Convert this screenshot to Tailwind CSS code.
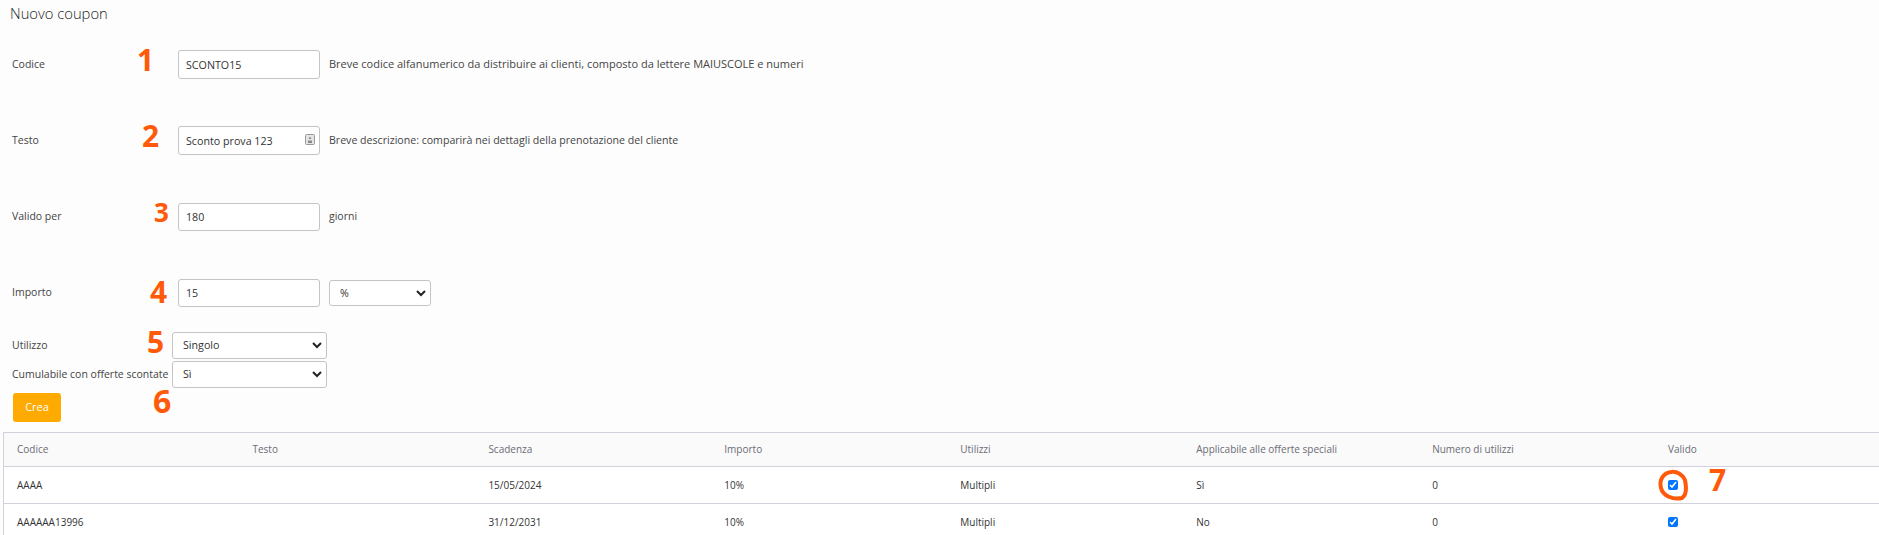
<!DOCTYPE html>
<html lang="it">
<head>
    <meta charset="UTF-8">
    <title>Nuovo coupon</title>
    <script src="https://cdn.jsdelivr.net/npm/@tailwindcss/browser@4"></script>
</head>
<body class="bg-[#fdfdfd]">
<div class="relative h-[535px] w-[1879px] overflow-hidden font-['Open_Sans',sans-serif] text-[10.5px] text-[#444]">
    <h1 class="pl-[10px] pt-[2px] h-[50px] text-[14.75px] leading-[22px] font-light text-[#222]">Nuovo coupon</h1>

    <div class="pl-[12px]">
        <div class="flex h-[29px] items-center">
            <label class="w-[166px]">Codice</label>
            <input type="text" value="SCONTO15" class="h-[29px] w-[142px] rounded-[3px] border border-[#c4c4c4] bg-white px-[7px] text-[10.7px] text-[#333] outline-none">
            <span class="ml-[9px] text-[11px]">Breve codice alfanumerico da distribuire ai clienti, composto da lettere MAIUSCOLE e numeri</span>
        </div>

        <div class="mt-[47px] flex h-[29px] items-center">
            <label class="w-[166px]">Testo</label>
            <div class="relative">
                <input type="text" value="Sconto prova 123" class="h-[29px] w-[142px] rounded-[3px] border border-[#c4c4c4] bg-white px-[7px] text-[10.7px] text-[#333] outline-none">
                <svg class="absolute right-[4px] top-[8px]" width="11" height="12" viewBox="0 0 11 12">
                    <rect x="0.5" y="0.5" width="9" height="10" rx="1" fill="#e4e4e4" stroke="#9a9a9a"/>
                    <path d="M5 2.5 6.5 5h-3zM3 6.5h4V9H3z" fill="#8a8a8a"/>
                </svg>
            </div>
            <span class="ml-[9px] text-[10.6px]">Breve descrizione: comparirà nei dettagli della prenotazione del cliente</span>
        </div>

        <div class="mt-[48px] flex h-[28px] items-center">
            <label class="w-[166px]">Valido per</label>
            <input type="text" value="180" class="h-[28px] w-[142px] rounded-[3px] border border-[#c4c4c4] bg-white px-[7px] text-[10.7px] text-[#333] outline-none">
            <span class="ml-[9px]">giorni</span>
        </div>

        <div class="mt-[48px] flex h-[28px] items-center">
            <label class="w-[166px]">Importo</label>
            <input type="text" value="15" class="h-[28px] w-[142px] rounded-[3px] border border-[#c4c4c4] bg-white px-[7px] text-[10.7px] text-[#333] outline-none">
            <div class="relative ml-[9px]">
                <select class="h-[26px] w-[102px] appearance-none rounded-[3px] border border-[#c4c4c4] bg-white px-[10px] text-[10.7px] text-[#333] outline-none">
                    <option>%</option>
                </select>
                <svg class="absolute right-[5px] top-[9px]" width="10" height="8" viewBox="0 0 10 8"><path d="M1 2l4 4 4-4" fill="none" stroke="#222" stroke-width="2"/></svg>
            </div>
        </div>

        <div class="mt-[25px] flex h-[27px] items-center">
            <label class="w-[160px]">Utilizzo</label>
            <div class="relative">
                <select class="h-[27px] w-[155px] appearance-none rounded-[3px] border border-[#c4c4c4] bg-white px-[10px] text-[10.7px] text-[#333] outline-none">
                    <option>Singolo</option>
                </select>
                <svg class="absolute right-[5px] top-[9px]" width="10" height="8" viewBox="0 0 10 8"><path d="M1 2l4 4 4-4" fill="none" stroke="#222" stroke-width="2"/></svg>
            </div>
        </div>

        <div class="mt-[2px] flex h-[27px] items-center">
            <label class="w-[160px] whitespace-nowrap">Cumulabile con offerte scontate</label>
            <div class="relative">
                <select class="h-[27px] w-[155px] appearance-none rounded-[3px] border border-[#c4c4c4] bg-white px-[10px] text-[10.7px] text-[#333] outline-none">
                    <option>Sì</option>
                </select>
                <svg class="absolute right-[5px] top-[9px]" width="10" height="8" viewBox="0 0 10 8"><path d="M1 2l4 4 4-4" fill="none" stroke="#222" stroke-width="2"/></svg>
            </div>
        </div>

        <button class="ml-[1px] mt-[5px] block h-[29px] w-[48px] rounded-[3px] bg-[#ffaa00] text-[11px] text-white">Crea</button>
    </div>

    <table class="ml-[3px] mt-[10px] w-[1888px] table-fixed border-collapse border-l border-[#d2d2dc] text-[10px]">
        <thead>
            <tr class="h-[34px] border-y border-[#d2d2dc] bg-[#fafafa] text-left text-[#6b6b76]">
                <th class="pl-[13px] font-normal">Codice</th>
                <th class="pl-[13px] font-normal">Testo</th>
                <th class="pl-[13px] font-normal">Scadenza</th>
                <th class="pl-[13px] font-normal">Importo</th>
                <th class="pl-[13px] font-normal">Utilizzi</th>
                <th class="pl-[13px] font-normal">Applicabile alle offerte speciali</th>
                <th class="pl-[13px] font-normal">Numero di utilizzi</th>
                <th class="pl-[13px] font-normal">Valido</th>
            </tr>
        </thead>
        <tbody class="bg-white text-[#333]">
            <tr class="h-[37px] border-b border-[#d2d2dc]">
                <td class="pl-[13px]">AAAA</td>
                <td class="pl-[13px]"></td>
                <td class="pl-[13px]">15/05/2024</td>
                <td class="pl-[13px]">10%</td>
                <td class="pl-[13px]">Multipli</td>
                <td class="pl-[13px]">Sì</td>
                <td class="pl-[13px]">0</td>
                <td class="pl-[13px]"><input type="checkbox" checked class="block size-[10px]"></td>
            </tr>
            <tr class="h-[37px] border-b border-[#d2d2dc]">
                <td class="pl-[13px]">AAAAAA13996</td>
                <td class="pl-[13px]"></td>
                <td class="pl-[13px]">31/12/2031</td>
                <td class="pl-[13px]">10%</td>
                <td class="pl-[13px]">Multipli</td>
                <td class="pl-[13px]">No</td>
                <td class="pl-[13px]">0</td>
                <td class="pl-[13px]"><input type="checkbox" checked class="block size-[10px]"></td>
            </tr>
        </tbody>
    </table>

    <!-- annotazioni a mano sopra la pagina -->
    <span class="absolute left-[137px] top-[42px] text-[30px] leading-[36px] font-bold text-[#ff5a0a]">1</span>
    <span class="absolute left-[142px] top-[118px] text-[30px] leading-[36px] font-bold text-[#ff5a0a]">2</span>
    <span class="absolute left-[154px] top-[196px] text-[26px] leading-[32px] font-bold text-[#ff5a0a]">3</span>
    <span class="absolute left-[150px] top-[274px] text-[30px] leading-[36px] font-bold text-[#ff5a0a]">4</span>
    <span class="absolute left-[147px] top-[324px] text-[30px] leading-[36px] font-bold text-[#ff5a0a]">5</span>
    <span class="absolute left-[153px] top-[382px] text-[32px] leading-[38px] font-bold text-[#ff5a0a]">6</span>
    <span class="absolute left-[1709px] top-[462px] text-[30px] leading-[36px] font-bold text-[#ff5a0a]">7</span>
    <svg class="absolute left-[1655px] top-[468px]" width="40" height="36" viewBox="0 0 40 36">
        <path d="M16 4C8 5 4 12 6 20c2 8 12 12 21 10 5-3 4-13 3-18C28 7 22 3 16 4z" fill="none" stroke="#ff5a0a" stroke-width="4"/>
    </svg>
</div>
</body>
</html>
